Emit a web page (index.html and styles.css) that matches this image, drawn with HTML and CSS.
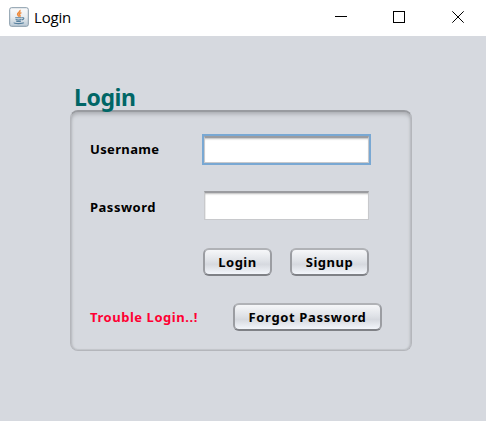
FILE: index.html
```html
<!DOCTYPE html>
<html lang="en">
<head>
<meta charset="utf-8">
<title>Login</title>
<link rel="stylesheet" href="styles.css">
</head>
<body>
<div class="window">
  <header class="titlebar">
    <svg class="app-icon" width="20" height="20" viewBox="0 0 20 20">
      <defs><linearGradient id="tile" x2="0" y2="1"><stop stop-color="#fbfbfb"/><stop offset=".5" stop-color="#e9edf0"/><stop offset="1" stop-color="#b9c9d5"/></linearGradient></defs>
      <rect x=".7" y=".7" width="18.6" height="18.6" rx="1.8" fill="url(#tile)" stroke="#8599a8"/>
      <path d="M10.8 3c1.400 2-2.700 2.600-2.200 4.400.2 1 1 1.400 1.200 2.200M12.400 5.600c-2.400 1-2.400 1.700-1.500 2.700.4.500.2 1-.3 1.400" fill="none" stroke="#ee8a3c" stroke-width="1.500"/>
      <path d="M6.200 10.800h6.600M6.600 12.600c1.500.5 4.300.5 5.800 0M7.200 14.200c1.400.4 3.400.4 4.700 0M13 10.800c2.600-.5 2.300 1.700-.2 2.100M5 15.600c0 1.300 8.600 1.300 9.800.1" fill="none" stroke="#557f9d" stroke-width="1.100"/>
    </svg>
    <span class="caption">Login</span>
    <svg class="controls" width="130" height="12" viewBox="0 0 130 12" shape-rendering="crispEdges">
      <path d="M0 5.500h12M58.500.500h11v11h-11z" fill="none" stroke="#000"/>
      <path d="M117.300.300l11.400 11.400M128.700.300l-11.400 11.400" stroke="#000" shape-rendering="auto"/>
    </svg>
  </header>
  <main class="content">
    <h1 class="heading"><span>Login</span></h1>
    <form class="panel">
      <div class="row row-user">
        <label class="label username" for="user">Username</label>
        <input class="field focused" id="user" type="text">
      </div>
      <div class="row row-pass">
        <label class="label password" for="pass">Password</label>
        <input class="field" id="pass" type="password">
      </div>
      <div class="row row-actions">
        <button class="button login" type="button">Login</button>
        <button class="button signup" type="button">Signup</button>
      </div>
      <div class="row row-help">
        <span class="label trouble">Trouble Login..!</span>
        <button class="button forgot" type="button">Forgot Password</button>
      </div>
    </form>
  </main>
</div>
</body>
</html>
```
FILE: styles.css
```css
* { box-sizing: border-box; }
body { margin: 0; background: #fff; overflow: hidden; }
.window { width: 486px; height: 421px; background: #d6d9df; }
.titlebar { height: 36px; background: #fff; display: flex; padding: 7px 0 0 9px; }
.app-icon { flex: none; }
.caption { margin-left: 5px; width: 301px; font: 15px/20px "Open Sans", sans-serif; letter-spacing: -0.2px; color: #000; }
.controls { margin-top: 4px; flex: none; }
.content { padding: 48px 0 0 70px; }
.heading { margin: 0 0 0 4px; height: 26px; font: bold 23px/27px "Noto Sans", sans-serif; letter-spacing: -0.4px; color: #066; }
.panel {
  width: 342px; height: 241px; padding-left: 19px;
  border: 1px solid #b4b6bb; border-top: 2px solid #999ba0; border-radius: 8px;
  box-shadow: inset 0 3px 4px -1px #a9abb0, inset 2px 0 2px -1px #bec0c6, inset -2px 0 2px -1px #bec0c6, inset 0 -1px 1px #c5c7cd;
}
.row { display: flex; align-items: center; }
.row-user { height: 30px; margin-top: 22px; }
.row-pass { height: 30px; margin-top: 26px; }
.row-actions { height: 28px; margin: 28px 0 0 113px; gap: 18px; }
.row-help { height: 28px; margin-top: 27px; }
.label { width: 114px; font: bold 13px/16px "Noto Sans", sans-serif; color: #000; white-space: nowrap; }
.username { letter-spacing: 0.35px; }
.password { letter-spacing: 0.5px; padding-top: 4px; }
.trouble { width: 143px; letter-spacing: 0.55px; color: #f03; }
.field {
  width: 165px; height: 29px; padding: 0 6px; outline: none; font: 13px "Noto Sans", sans-serif;
  border: 1px solid #c8c9cc; border-top: 2px solid #9b9ca0; background: #fff;
  box-shadow: inset 0 2px 2px -1px #bbb, inset 1px 0 #eee;
}
.focused { height: 27px; box-shadow: 0 0 0 2px #79a8d3, inset 0 2px 2px -1px #bbb; }
.button {
  height: 28px; padding: 0; color: #000; font: bold 13px/16px "Noto Sans", sans-serif;
  border: 2px solid; border-color: #b0b2b6 #9b9da2 #7f8186 #9b9da2; border-radius: 6px;
  background: linear-gradient(#f6f7f9, #dfe2e7 45%, #d6d9df 60%, #f3f6fb);
}
.login { width: 69px; letter-spacing: 0.5px; }
.signup { width: 79px; letter-spacing: 0.5px; }
.forgot { width: 149px; letter-spacing: 0.65px; }
```
